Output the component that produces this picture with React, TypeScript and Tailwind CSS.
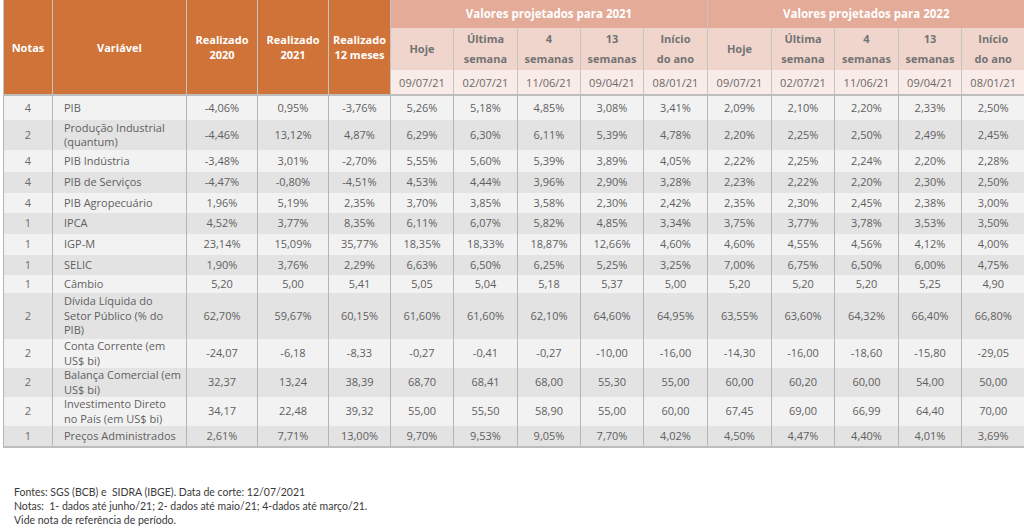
import React from "react";

const rows: { n: string; v: string[]; d: string[]; h: number }[] = [
  { n: "4", v: ["PIB"], d: ["-4,06%","0,95%","-3,76%","5,26%","5,18%","4,85%","3,08%","3,41%","2,09%","2,10%","2,20%","2,33%","2,50%"], h: 25 },
  { n: "2", v: ["Produção Industrial", "(quantum)"], d: ["-4,46%","13,12%","4,87%","6,29%","6,30%","6,11%","5,39%","4,78%","2,20%","2,25%","2,50%","2,49%","2,45%"], h: 30 },
  { n: "4", v: ["PIB Indústria"], d: ["-3,48%","3,01%","-2,70%","5,55%","5,60%","5,39%","3,89%","4,05%","2,22%","2,25%","2,24%","2,20%","2,28%"], h: 22 },
  { n: "4", v: ["PIB de Serviços"], d: ["-4,47%","-0,80%","-4,51%","4,53%","4,44%","3,96%","2,90%","3,28%","2,23%","2,22%","2,20%","2,30%","2,50%"], h: 21 },
  { n: "4", v: ["PIB Agropecuário"], d: ["1,96%","5,19%","2,35%","3,70%","3,85%","3,58%","2,30%","2,42%","2,35%","2,30%","2,45%","2,38%","3,00%"], h: 20 },
  { n: "1", v: ["IPCA"], d: ["4,52%","3,77%","8,35%","6,11%","6,07%","5,82%","4,85%","3,34%","3,75%","3,77%","3,78%","3,53%","3,50%"], h: 21 },
  { n: "1", v: ["IGP-M"], d: ["23,14%","15,09%","35,77%","18,35%","18,33%","18,87%","12,66%","4,60%","4,60%","4,55%","4,56%","4,12%","4,00%"], h: 21 },
  { n: "1", v: ["SELIC"], d: ["1,90%","3,76%","2,29%","6,63%","6,50%","6,25%","5,25%","3,25%","7,00%","6,75%","6,50%","6,00%","4,75%"], h: 20 },
  { n: "1", v: ["Câmbio"], d: ["5,20","5,00","5,41","5,05","5,04","5,18","5,37","5,00","5,20","5,20","5,20","5,25","4,90"], h: 18 },
  { n: "2", v: ["Dívida Líquida do", "Setor Público (% do", "PIB)"], d: ["62,70%","59,67%","60,15%","61,60%","61,60%","62,10%","64,60%","64,95%","63,55%","63,60%","64,32%","66,40%","66,80%"], h: 46 },
  { n: "2", v: ["Conta Corrente (em", "US$ bi)"], d: ["-24,07","-6,18","-8,33","-0,27","-0,41","-0,27","-10,00","-16,00","-14,30","-16,00","-18,60","-15,80","-29,05"], h: 29 },
  { n: "2", v: ["Balança Comercial (em", "US$ bi)"], d: ["32,37","13,24","38,39","68,70","68,41","68,00","55,30","55,00","60,00","60,20","60,00","54,00","50,00"], h: 29 },
  { n: "2", v: ["Investimento Direto", "no País (em US$ bi)"], d: ["34,17","22,48","39,32","55,00","55,50","58,90","55,00","60,00","67,45","69,00","66,99","64,40","70,00"], h: 28 },
  { n: "1", v: ["Preços Administrados"], d: ["2,61%","7,71%","13,00%","9,70%","9,53%","9,05%","7,70%","4,02%","4,50%","4,47%","4,40%","4,01%","3,69%"], h: 21 },
];

const widths = [49, 134, 71, 71, 62, 63, 64, 63, 63, 64, 64, 63, 64, 63, 63];

const sub: string[][] = [["Hoje"], ["Última", "semana"], ["4", "semanas"], ["13", "semanas"], ["Início", "do ano"]];
const dates = ["09/07/21", "02/07/21", "11/06/21", "09/04/21", "08/01/21"];

export default function App() {
  const font = { fontFamily: '"Open Sans", "Noto Sans", sans-serif' };
  return (
    <div className="w-[1024px] h-[530px] bg-white overflow-hidden">
      <div className="pl-[3px]" style={font}>
        <table className="table-fixed border-collapse w-[1021px]">
          <colgroup>
            {widths.map((w, i) => (
              <col key={i} style={{ width: w }} />
            ))}
          </colgroup>
          <thead>
            <tr className="h-[28px]">
              {[
                ["Notas"],
                ["Variável"],
                ["Realizado", "2020"],
                ["Realizado", "2021"],
                ["Realizado", "12 meses"],
              ].map((t, i) => (
                <th
                  key={i}
                  rowSpan={3}
                  className="bg-[#d07338] text-white font-bold text-[11px] leading-[15px] border-x border-[#c4c4c4] p-0 align-middle text-center"
                >
                  {t.map((l, j) => (
                    <div key={j}>{l}</div>
                  ))}
                </th>
              ))}
              <th colSpan={5} className="bg-[#e3ab98] text-white font-bold text-[11.5px] border-x border-[#c4c4c4] p-0 text-center">
                Valores projetados para 2021
              </th>
              <th colSpan={5} className="bg-[#e3ab98] text-white font-bold text-[11.5px] border-l border-[#c4c4c4] p-0 text-center">
                Valores projetados para 2022
              </th>
            </tr>
            <tr className="h-[42px]">
              {[0, 1].map((g) =>
                sub.map((t, i) => (
                  <th
                    key={g + "-" + i}
                    className={`bg-[#f0d5cc] text-[#737373] font-bold text-[11px] leading-[20px] p-0 text-center border-[#c4c4c4] ${g === 1 && i === 4 ? "border-l" : "border-x"}`}
                  >
                    {t.map((l, j) => (
                      <div key={j}>{l}</div>
                    ))}
                  </th>
                ))
              )}
            </tr>
            <tr className="h-[25px]">
              {[0, 1].map((g) =>
                dates.map((d, i) => (
                  <th
                    key={g + "-" + i}
                    className={`bg-[#f9ebe7] text-[#6a6a6a] font-normal text-[11px] pt-[3px] p-0 text-center border-[#c4c4c4] ${g === 1 && i === 4 ? "border-l" : "border-x"}`}
                  >
                    {d}
                  </th>
                ))
              )}
            </tr>
          </thead>
          <tbody className="border-t-2 border-b-2 border-[#bdbdbd]">
            {rows.map((r, ri) => (
              <tr key={ri} className={ri % 2 === 0 ? "bg-[#f2f2f2]" : "bg-[#e3e3e3]"} style={{ height: r.h }}>
                <td className="text-center text-[11px] text-[#6a6a6a] border-x border-[#b5b5b5] p-0">{r.n}</td>
                <td className="text-left text-[11px] leading-[14.5px] text-[#5f5f5f] border-x border-[#b5b5b5] p-0 pl-[11px] whitespace-nowrap">
                  {r.v.map((l, j) => (
                    <div key={j}>{l}</div>
                  ))}
                </td>
                {r.d.map((v, i) => (
                  <td
                    key={i}
                    className={`text-center text-[11px] text-[#5f5f5f] p-0 border-[#b5b5b5] ${i === 12 ? "border-l" : "border-x"}`}
                  >
                    {v}
                  </td>
                ))}
              </tr>
            ))}
          </tbody>
        </table>
      </div>
      <div
        className="mt-[37px] pl-[14px] text-[10.5px] leading-[14px] text-[#3a3a3a]"
        style={{ fontFamily: 'Lato, "Open Sans", sans-serif' }}
      >
        <div>Fontes: SGS (BCB) e&nbsp; SIDRA (IBGE). Data de corte: 12/07/2021</div>
        <div>Notas:&nbsp; 1- dados até junho/21; 2- dados até maio/21; 4-dados até março/21.</div>
        <div>Vide nota de referência de período.</div>
      </div>
    </div>
  );
}
